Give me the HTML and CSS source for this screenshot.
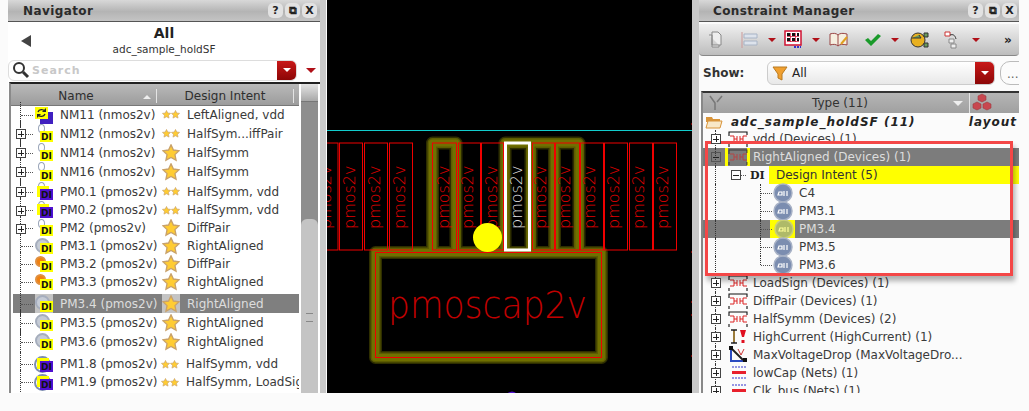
FILE: index.html
```html
<!DOCTYPE html>
<html lang="en">
<head>
    <meta charset="UTF-8">
    <meta name="viewport" content="width=device-width, initial-scale=1.0">
    <title>Constraint Manager</title>
    <link rel="stylesheet" href="styles.css">
</head>
<body>
    <svg class="defs" width="0" height="0">
        <symbol id="star" viewBox="0 0 20 20">
            <path d="M10 1l2.7 5.7 6.3.8-4.6 4.3 1.2 6.2-5.6-3-5.6 3 1.2-6.2L1 7.500l6.300-.8z" fill="#fc3" stroke="#c9a26a" stroke-width="1.5"/>
        </symbol>
        <symbol id="device" viewBox="0 0 20 18">
            <path d="M1 6V2H19V5M1 14V17M19 14V17" fill="none" stroke="#111" stroke-width="1.100"/>
            <path d="M2 6H6V12H2M6 9H9M9 6V12M12 6V12M12 9H15M19 6H15V12H19" fill="none" stroke="#d22" stroke-width="1"/>
        </symbol>
        <symbol id="pin" viewBox="0 0 20 20">
            <circle cx="10" cy="10" r="9" fill="#7b8db0" stroke="#a8b2c6" stroke-width="1.500"/>
            <path d="M5 12h4v-3h-3zM11 8v5M14 8v5" fill="none" stroke="#fff" stroke-width="1.200"/>
        </symbol>
    </svg>

    <div class="workspace">
        <section class="navigator">
            <div class="titlebar">
                <span class="title">Navigator</span>
                <span class="win-btn">?</span>
                <span class="win-btn">&#10697;</span>
                <span class="win-btn">X</span>
            </div>
            <div class="nav-head">
                <span class="back"></span>
                <div class="nav-name">
                    <div class="nav-all">All</div>
                    <div class="nav-cell">adc_sample_holdSF</div>
                </div>
            </div>
            <div class="search-row">
                <div class="search">
                    <svg class="lens" width="18" height="18" viewBox="0 0 18 18"><circle cx="7" cy="7" r="5" fill="none" stroke="#333" stroke-width="2"/><path d="M11 11l5 5" stroke="#333" stroke-width="3"/></svg>
                    <span class="placeholder">Search</span>
                    <span class="red-drop"><i></i></span>
                </div>
                <span class="red-arrow"></span>
            </div>
            <div class="nav-table">
                <div class="nav-list">
                    <div class="nav-header">
                        <span class="col-name">Name<i class="sort-up"></i></span>
                        <span class="col-intent">Design Intent</span>
                        <span class="col-end"></span>
                    </div>

                    <div class="row"><span class="twig"></span><span class="icon"><svg class="sync" width="18" height="18" viewBox="0 0 18 18"><rect x="5" y="6" width="13" height="12" fill="#4020c0"/><rect x="0" y="1" width="13" height="12" fill="#ff0"/><path d="M3 6c1-3 5-3 7-1M10 8c-1 3-5 3-7 1" fill="none" stroke="#222" stroke-width="1.300"/><path d="M11 2v4H7zM2 12V8h4z" fill="#222"/></svg></span><span class="name">NM11 (nmos2v)</span><span class="stars"><svg class="s2"><use href="#star"/></svg><svg class="s2"><use href="#star"/></svg></span><span class="intent">LeftAligned, vdd</span></div>
                    <div class="row"><span class="twig"><i class="box plus"></i></span><span class="icon"><i class="dot"></i><b class="di">DI</b></span><span class="name">NM12 (nmos2v)</span><span class="stars"><svg class="s2"><use href="#star"/></svg><svg class="s2"><use href="#star"/></svg></span><span class="intent">HalfSym...iffPair</span></div>
                    <div class="row"><span class="twig"><i class="box plus"></i></span><span class="icon"><i class="dot"></i><b class="di">DI</b></span><span class="name">NM14 (nmos2v)</span><span class="stars"><svg class="s1"><use href="#star"/></svg></span><span class="intent">HalfSymm</span></div>
                    <div class="row tall"><span class="twig"><i class="box plus"></i></span><span class="icon"><i class="dot"></i><b class="di">DI</b></span><span class="name">NM16 (nmos2v)</span><span class="stars"><svg class="s1"><use href="#star"/></svg></span><span class="intent">HalfSymm</span></div>
                    <div class="row"><span class="twig"><i class="box plus"></i></span><span class="icon"><i class="dot"></i><i class="back-y"></i><b class="di di-p">DI</b></span><span class="name">PM0.1 (pmos2v)</span><span class="stars"><svg class="s2"><use href="#star"/></svg><svg class="s2"><use href="#star"/></svg></span><span class="intent">HalfSymm, vdd</span></div>
                    <div class="row short"><span class="twig"><i class="box plus"></i></span><span class="icon"><i class="dot"></i><i class="back-y"></i><b class="di di-p">DI</b></span><span class="name">PM0.2 (pmos2v)</span><span class="stars"><svg class="s2"><use href="#star"/></svg><svg class="s2"><use href="#star"/></svg></span><span class="intent">HalfSymm, vdd</span></div>
                    <div class="row short"><span class="twig"><i class="box plus"></i></span><span class="icon"><i class="dot"></i><b class="di">DI</b></span><span class="name">PM2 (pmos2v)</span><span class="stars"><svg class="s1"><use href="#star"/></svg></span><span class="intent">DiffPair</span></div>
                    <div class="row short"><span class="twig"></span><span class="icon"><i class="ring"></i><b class="di">DI</b></span><span class="name">PM3.1 (pmos2v)</span><span class="stars"><svg class="s1"><use href="#star"/></svg></span><span class="intent">RightAligned</span></div>
                    <div class="row short"><span class="twig"></span><span class="icon"><i class="ring ring-o"></i><b class="di">DI</b></span><span class="name">PM3.2 (pmos2v)</span><span class="stars"><svg class="s1"><use href="#star"/></svg></span><span class="intent">DiffPair</span></div>
                    <div class="row short"><span class="twig"></span><span class="icon"><i class="ring ring-o"></i><b class="di">DI</b></span><span class="name">PM3.3 (pmos2v)</span><span class="stars"><svg class="s1"><use href="#star"/></svg></span><span class="intent">RightAligned</span></div>
                    <div class="row selected gap-s"><span class="twig"></span><span class="icon"><i class="ring"></i><b class="di">DI</b></span><span class="name">PM3.4 (pmos2v)</span><span class="stars"><svg class="s1"><use href="#star"/></svg></span><span class="intent">RightAligned</span></div>
                    <div class="row"><span class="twig"></span><span class="icon"><i class="ring"></i><b class="di">DI</b></span><span class="name">PM3.5 (pmos2v)</span><span class="stars"><svg class="s1"><use href="#star"/></svg></span><span class="intent">RightAligned</span></div>
                    <div class="row"><span class="twig"></span><span class="icon"><i class="ring"></i><b class="di">DI</b></span><span class="name">PM3.6 (pmos2v)</span><span class="stars"><svg class="s1"><use href="#star"/></svg></span><span class="intent">RightAligned</span></div>
                    <div class="row short gap-l"><span class="twig"></span><span class="icon"><i class="ring ring-big"></i><i class="back-y"></i><b class="di di-p">DI</b></span><span class="name">PM1.8 (pmos2v)</span><span class="stars small"><svg class="s2"><use href="#star"/></svg><svg class="s2"><use href="#star"/></svg></span><span class="intent">HalfSymm, vdd</span></div>
                    <div class="row short"><span class="twig"></span><span class="icon"><i class="ring ring-big"></i><i class="back-y"></i><b class="di di-p">DI</b></span><span class="name">PM1.9 (pmos2v)</span><span class="stars small"><svg class="s2"><use href="#star"/></svg><svg class="s2"><use href="#star"/></svg></span><span class="intent">HalfSymm, LoadSig</span></div>
                </div>
                <div class="scrollbar">
                    <span class="scroll-up"></span>
                    <span class="scroll-thumb"><i></i></span>
                </div>
            </div>
        </section>

        <svg class="layout" width="365" height="393" viewBox="327 0 365 393">
            <rect x="327" y="0" width="365" height="393" fill="#000"/>
            <path d="M327 130.500H692" stroke="#1cc" stroke-width="1"/>

            <!-- halo round the selected group -->
            <g class="halo">
                <path d="M432.500 250V143H456V250M505 250V143H579V250M531 143V250M554.500 143V250M375.500 357.500V252.500H601.500V357.500Z"/>
            </g>
            <g class="halo-mid">
                <path d="M432.500 250V143H456V250M505 250V143H579V250M531 143V250M554.500 143V250M375.500 357.500V252.500H601.500V357.500Z"/>
            </g>
            <g class="halo-in">
                <path d="M432.500 250V143H456V250M505 250V143H579V250M531 143V250M554.500 143V250M375.500 357.500V252.500H601.500V357.500Z"/>
            </g>

            <g class="dev">
                <rect x="314" y="143" width="24" height="107"/>
                <rect x="339.500" y="143" width="23" height="107"/>
                <rect x="364.500" y="143" width="23" height="107"/>
                <rect x="389.500" y="143" width="23" height="107"/>
                <rect x="432.500" y="143" width="24" height="107"/>
                <rect x="458.500" y="143" width="22" height="107"/>
                <rect x="481.500" y="143" width="22" height="107"/>
                <rect x="532.500" y="143" width="22" height="107"/>
                <rect x="555.500" y="143" width="24" height="107"/>
                <rect x="580.500" y="143" width="23" height="107"/>
                <rect x="604.500" y="143" width="23" height="107"/>
                <rect x="629.500" y="143" width="23" height="107"/>
                <rect x="653.500" y="143" width="23" height="107"/>
                <rect x="375.500" y="252.500" width="226" height="105"/>
            </g>
            <rect class="picked" x="505.500" y="143" width="24" height="107"/>

            <g class="dev-text">
                <text transform="translate(331,229) rotate(-90)">pmos2v</text>
                <text transform="translate(355,229) rotate(-90)">pmos2v</text>
                <text transform="translate(380,229) rotate(-90)">pmos2v</text>
                <text transform="translate(405,229) rotate(-90)">pmos2v</text>
                <text transform="translate(449,229) rotate(-90)">pmos2v</text>
                <text transform="translate(473,229) rotate(-90)">pmos2v</text>
                <text transform="translate(497,229) rotate(-90)">pmos2v</text>
                <text class="picked-text" transform="translate(522,229) rotate(-90)">pmos2v</text>
                <text transform="translate(546,229) rotate(-90)">pmos2v</text>
                <text transform="translate(570,229) rotate(-90)">pmos2v</text>
                <text transform="translate(595,229) rotate(-90)">pmos2v</text>
                <text transform="translate(619,229) rotate(-90)">pmos2v</text>
                <text transform="translate(644,229) rotate(-90)">pmos2v</text>
                <text transform="translate(668,229) rotate(-90)">pmos2v</text>
            </g>
            <text class="cap-text" x="388" y="318" textLength="199" lengthAdjust="spacingAndGlyphs">pmoscap2v</text>

            <circle cx="487.500" cy="237.500" r="14.500" fill="#ff0"/>
            <circle cx="512" cy="397.500" r="6" fill="#5010d0"/>
            <path d="M691 302h1M691 315h1M691 356h1M691 252h1M691 124h1" stroke="#e00"/>
        </svg>

        <section class="manager">
            <div class="titlebar">
                <span class="title">Constraint Manager</span>
                <span class="win-btn">?</span>
                <span class="win-btn">&#10697;</span>
                <span class="win-btn">X</span>
            </div>
            <div class="toolbar">
                <svg class="tool t-doc" width="16" height="18" viewBox="0 0 16 18"><path d="M5 1h6l3 3v10H5zM2 4h3v12h7v-2" fill="#eee" stroke="#888"/></svg>
                <svg class="tool t-list" width="18" height="18" viewBox="0 0 18 18"><path d="M1 1v16" stroke="#c99"/><path d="M3 3h13v4H3zM3 10h13v4H3z" fill="#dde3ec" stroke="#a8b4c6"/></svg>
                <span class="drop"></span>
                <svg class="tool t-grid" width="18" height="19" viewBox="0 0 18 19"><rect x="1" y="1" width="16" height="14" fill="#fff" stroke="#d01030" stroke-width="1.500"/><path d="M3 3h3v3H3zM8 3h3v3H8zM13 3h2v3h-2zM3 8h3v3H3zM8 8h3v3H8zM13 8h2v3h-2z" fill="#111"/><path d="M3 6.500h12M3 11.500h12M6.500 3v9M11.500 3v9" stroke="#d01030" stroke-width=".7"/><path d="M10 17h7" stroke="#33c" stroke-width="2" stroke-dasharray="2 1"/></svg>
                <span class="drop"></span>
                <svg class="tool t-book" width="20" height="16" viewBox="0 0 20 16"><path d="M1 2c3-1 6-1 8 1 2-2 5-2 9-1v11c-4-1-7-1-9 1-2-2-5-2-8-1z" fill="#f6efe0" stroke="#944"/><path d="M9 3v11" stroke="#944"/><path d="M12 12l6-7" stroke="#e0a020" stroke-width="2"/></svg>
                <svg class="tool t-check" width="18" height="14" viewBox="0 0 18 14"><path d="M1 7l3-2 3 3 7-7 3 2-10 10z" fill="#1a9a2a"/></svg>
                <span class="drop"></span>
                <svg class="tool t-run" width="20" height="20" viewBox="0 0 20 20"><circle cx="9" cy="10" r="7" fill="#e8b020" stroke="#333"/><path d="M3 8h9l-2-3M15 3h4v4h-4zM15 13h4v4h-4z" fill="#6a9a5a" stroke="#333"/></svg>
                <svg class="tool t-tree" width="18" height="18" viewBox="0 0 18 18"><path d="M1 1h5v4H1z" fill="#fff" stroke="#c33"/><path d="M6 4c3-1 5 0 6 4" fill="none" stroke="#333"/><path d="M5 8h5v4H5zM7 13h5v4H7z" fill="#eee" stroke="#888"/></svg>
                <span class="drop"></span>
                <span class="more">&raquo;</span>
            </div>
            <div class="show-row">
                <span class="show-label">Show:</span>
                <div class="show-select">
                    <svg width="16" height="16" viewBox="0 0 16 16"><path d="M1 2h14l-5 7v6l-4-2V9z" fill="#f0a030" stroke="#b97a20"/></svg>
                    <span>All</span>
                    <span class="red-drop"><i></i></span>
                </div>
                <span class="dots-btn">...</span>
            </div>
            <div class="tree-header">
                <svg width="14" height="16" viewBox="0 0 14 16"><path d="M1 1l5 7v7M13 1L8 7" fill="none" stroke="#777" stroke-width="1.500"/></svg>
                <span class="type-col">Type (11)</span>
                <i class="sort-down"></i>
                <span class="cubes">
                    <svg width="20" height="18" viewBox="0 0 20 18"><path d="M10 1l4 2v4l-4 2-4-2V3zM5 9l4 2v4l-4 2-4-2v-4zM15 9l4 2v4l-4 2-4-2v-4z" fill="#c8474f" stroke="#9a3a40" stroke-width=".6"/></svg>
                </span>
            </div>
            <div class="tree">
                <div class="tree-row root">
                    <svg class="folder" width="18" height="16" viewBox="0 0 18 16"><path d="M1 3h6l1 2h7v3H1z" fill="#d8943a"/><path d="M1 14l2-7h14l-2 7z" fill="#f8e8c8" stroke="#d8943a"/></svg>
                    <span class="root-name">adc_sample_holdSF (11)</span>
                    <span class="root-view">layout</span>
                </div>
                <div class="tree-row"><span class="twig-r"><i class="box plus"></i></span><span class="dev-ic"><svg width="20" height="18"><use href="#device"/></svg></span><span class="label">vdd (Devices) (1)</span></div>
                <div class="tree-row band"><span class="twig-r"><i class="box minus"></i></span><span class="dev-ic hit"><svg width="20" height="18"><use href="#device"/></svg></span><span class="label">RightAligned (Devices) (1)</span></div>
                <div class="tree-row"><span class="twig-r"></span><span class="twig-2"><i class="box minus"></i></span><span class="di-mark">DI</span><span class="label-hit">Design Intent (5)</span></div>
                <div class="tree-row"><span class="twig-r"></span><span class="lead"></span><span class="twig-3"></span><span class="pin"><svg width="20" height="20"><use href="#pin"/></svg></span><span class="label">C4</span></div>
                <div class="tree-row"><span class="twig-r"></span><span class="lead"></span><span class="twig-3"></span><span class="pin"><svg width="20" height="20"><use href="#pin"/></svg></span><span class="label">PM3.1</span></div>
                <div class="tree-row band"><span class="twig-r"></span><span class="lead"></span><span class="twig-3"></span><span class="pin hit"><svg width="20" height="20"><use href="#pin"/></svg></span><span class="label">PM3.4</span></div>
                <div class="tree-row"><span class="twig-r"></span><span class="lead"></span><span class="twig-3"></span><span class="pin"><svg width="20" height="20"><use href="#pin"/></svg></span><span class="label">PM3.5</span></div>
                <div class="tree-row"><span class="twig-r"></span><span class="lead"></span><span class="twig-3 end"></span><span class="pin"><svg width="20" height="20"><use href="#pin"/></svg></span><span class="label">PM3.6</span></div>
                <div class="tree-row"><span class="twig-r"><i class="box plus"></i></span><span class="dev-ic"><svg width="20" height="18"><use href="#device"/></svg></span><span class="label">LoadSign (Devices) (1)</span></div>
                <div class="tree-row"><span class="twig-r"><i class="box plus"></i></span><span class="dev-ic"><svg width="20" height="18"><use href="#device"/></svg></span><span class="label">DiffPair (Devices) (1)</span></div>
                <div class="tree-row"><span class="twig-r"><i class="box plus"></i></span><span class="dev-ic"><svg width="20" height="18"><use href="#device"/></svg></span><span class="label">HalfSymm (Devices) (2)</span></div>
                <div class="tree-row"><span class="twig-r"><i class="box plus"></i></span><span class="dev-ic"><svg width="20" height="18" viewBox="0 0 20 18"><path d="M3 2h6M3 15h6M6 2v13" stroke="#222" stroke-width="1.500"/><path d="M6 3v11" stroke="#e0a020"/><path d="M12 2h6l-2 7h-2zM13.500 12h3v3h-3z" fill="#e01020"/></svg></span><span class="label">HighCurrent (HighCurrent) (1)</span></div>
                <div class="tree-row"><span class="twig-r"><i class="box plus"></i></span><span class="dev-ic"><svg width="20" height="18" viewBox="0 0 20 18"><path d="M3 2v13h14" fill="none" stroke="#2a4ac0" stroke-width="2"/><path d="M3 2l12 12" stroke="#222" stroke-width="2"/><path d="M10 3l3 6 3-6" fill="none" stroke="#c33"/><rect x="1" y="0" width="4" height="4" fill="#111"/><rect x="15" y="12" width="4" height="4" fill="#111"/></svg></span><span class="label">MaxVoltageDrop (MaxVoltageDro...</span></div>
                <div class="tree-row"><span class="twig-r"><i class="box plus"></i></span><span class="dev-ic"><svg width="20" height="18" viewBox="0 0 20 18"><path d="M4 3h14M4 14h14" stroke="#33c" stroke-dasharray="2 1"/><path d="M4 8.500h14" stroke="#e8202c" stroke-width="3"/></svg></span><span class="label">lowCap (Nets) (1)</span></div>
                <div class="tree-row"><span class="twig-r"><i class="box plus"></i></span><span class="dev-ic"><svg width="20" height="18" viewBox="0 0 20 18"><path d="M4 3h14M4 14h14" stroke="#33c" stroke-dasharray="2 1"/><path d="M4 8.500h14" stroke="#e8202c" stroke-width="3"/></svg></span><span class="label">Clk_bus (Nets) (1)</span></div>
            </div>
            <div class="highlight"></div>
        </section>
    </div>
</body>
</html>
```

FILE: styles.css
```css
body {
    margin: 0;
    height: 411px;
    overflow: hidden;
    background-color: #fbfbfb;
    font-family: "DejaVu Sans", sans-serif;
    font-size: 12px;
    color: #3a3a3a;
}
.defs {
    position: absolute;
}
.workspace {
    display: flex;
    height: 393px;
    padding-left: 8px;
    overflow: hidden;
}

/* shared bits */
.titlebar {
    display: flex;
    align-items: center;
    height: 22px;
    box-sizing: border-box;
    border-bottom: 1px solid #555;
    background: linear-gradient(#d8d8d8, #b4b4b4 55%, #c4c4c4);
}
.title {
    flex: 1;
    font-weight: bold;
    letter-spacing: 0.4px;
    color: #2b2b2b;
}
.win-btn {
    width: 15px;
    height: 15px;
    margin-right: 2px;
    border-radius: 5px;
    background-color: #e2e2e2;
    text-align: center;
    font-size: 11px;
    font-weight: bold;
    line-height: 15px;
    color: #222;
}
.red-drop {
    display: flex;
    align-items: center;
    justify-content: center;
    width: 19px;
    align-self: stretch;
    border-radius: 0 5px 5px 0;
    background: linear-gradient(#c81818, #8c0606);
}
.red-drop i {
    border-left: 4px solid transparent;
    border-right: 4px solid transparent;
    border-top: 4px solid #fff;
}
.box {
    position: absolute;
    top: 5px;
    z-index: 1;
    width: 8px;
    height: 8px;
    border: 1px solid #444;
    background-color: #fff;
    background-repeat: no-repeat;
    background-position: center;
}
.plus {
    background-image: linear-gradient(#222, #222), linear-gradient(#222, #222);
    background-size: 6px 1px, 1px 6px;
}
.minus {
    background-image: linear-gradient(#222, #222);
    background-size: 6px 1px;
}

/* left panel */
.navigator {
    width: 312px;
    flex: none;
    margin-right: 1px;
    border-right: 6px solid #c8c8c8;
    background-color: #fff;
}
.navigator .titlebar {
    padding-left: 15px;
    padding-right: 1px;
}
.nav-head {
    display: flex;
    align-items: center;
    height: 37px;
    padding-left: 13px;
}
.back {
    border-top: 6px solid transparent;
    border-bottom: 6px solid transparent;
    border-right: 10px solid #444;
}
.nav-name {
    flex: 1;
    text-align: center;
    padding-right: 23px;
}
.nav-all {
    font-size: 14px;
    font-weight: bold;
    line-height: 17px;
    color: #222;
}
.nav-cell {
    font-size: 10.500px;
    line-height: 14px;
    color: #333;
}
.search-row {
    display: flex;
    align-items: center;
    height: 22px;
}
.search {
    display: flex;
    align-items: center;
    width: 289px;
    height: 21px;
    border: 1px solid #ddd;
    border-radius: 6px;
    box-sizing: border-box;
}
.lens {
    margin-left: 3px;
}
.placeholder {
    flex: 1;
    margin-left: 2px;
    font-weight: bold;
    letter-spacing: 1px;
    font-size: 11px;
    color: #c8c8c8;
}
.red-arrow {
    margin-left: 9px;
    border-left: 5px solid transparent;
    border-right: 5px solid transparent;
    border-top: 5px solid #b01018;
}
.nav-table {
    display: flex;
    height: 311px;
    margin-top: 1px;
    margin-left: 1px;
    border-top: 2px solid #222;
    border-left: 2px solid #8a8a8a;
    overflow: hidden;
}
.nav-list {
    width: 288px;
    flex: none;
}
.nav-header {
    display: flex;
    height: 21px;
    box-sizing: border-box;
    padding-top: 2px;
    align-items: center;
    background: linear-gradient(#b9b9b9, #9c9c9c);
    box-shadow: 0 1px 0 #777;
    color: #2e2e2e;
}
.col-name {
    position: relative;
    width: 146px;
    text-align: center;
    box-sizing: border-box;
    padding-right: 15px;
    border-right: 1px solid #e4e4e4;
}
.sort-up {
    position: absolute;
    top: 6px;
    right: 5px;
    border-left: 4px solid transparent;
    border-right: 4px solid transparent;
    border-bottom: 4px solid #eee;
}
.col-intent {
    flex: 1;
    text-align: center;
    border-right: 1px solid #e4e4e4;
}
.col-end {
    width: 5px;
}
.row {
    display: flex;
    align-items: center;
    height: 19px;
    margin-left: 2px;
    white-space: nowrap;
}
.short {
    height: 18px;
}
.tall {
    height: 20px;
}
.gap-s {
    margin-top: 3px;
}
.gap-l {
    margin-top: 4px;
}
.selected {
    background: #7f7f7f;
    color: #ddd;
}
.selected .icon,
.selected .stars {
    background-color: #c4c4c4;
}
.twig {
    position: relative;
    align-self: stretch;
    width: 22px;
    flex: none;
}
.twig::before {
    content: "";
    position: absolute;
    left: 7px;
    top: -3px;
    bottom: -3px;
    border-left: 1px dotted #333;
}
.twig::after {
    content: "";
    position: absolute;
    left: 8px;
    width: 12px;
    top: 50%;
    border-top: 1px dotted #555;
}
.twig .box {
    left: 3px;
}
.icon {
    position: relative;
    align-self: stretch;
    width: 18px;
    margin-right: 7px;
    flex: none;
}
.di {
    position: absolute;
    left: 5px;
    bottom: 1px;
    z-index: 2;
    width: 13px;
    height: 11px;
    background-color: #ff0;
    color: #111;
    font-size: 9px;
    line-height: 12px;
    text-align: center;
}
.di-p {
    background-color: #5010d0;
}
.sync {
    display: block;
    margin-top: 1px;
}
.back-y {
    position: absolute;
    left: 2px;
    bottom: 4px;
    z-index: 1;
    width: 12px;
    height: 11px;
    background-color: #ff0;
}
.dot {
    position: absolute;
    left: 3px;
    top: 0;
    width: 5px;
    height: 7px;
    border: 1px solid #99a4b8;
    border-radius: 50%;
}
.ring {
    position: absolute;
    left: 0;
    top: 1px;
    width: 11px;
    height: 11px;
    border: 2px solid #a6aebd;
    border-radius: 50%;
    background-color: #c6ccd6;
}
.ring-o {
    width: 7px;
    height: 7px;
    border-color: #e09040;
    background-color: #f08010;
}
.ring-big {
    width: 13px;
    height: 13px;
    left: -1px;
    border-color: #7d8db0;
    background-color: #fff;
}
.name {
    width: 96px;
    flex: none;
}
.stars {
    display: flex;
    align-items: center;
    justify-content: center;
    align-self: stretch;
    width: 18px;
    margin: 0 7px 0 6px;
    flex: none;
}
.s1 {
    width: 18px;
    height: 18px;
}
.s2 {
    width: 9px;
    height: 9px;
}
.small {
    margin-right: 7px;
    margin-left: 5px;
}
.intent {
    flex: 1;
    overflow: hidden;
}
.scrollbar {
    display: flex;
    flex-direction: column;
    justify-content: space-between;
    width: 17px;
    margin-left: 2px;
    background-color: #8e8e8e;
}
.scroll-up {
    height: 17px;
    background: linear-gradient(#e4e4e4, #a8a8a8);
    border-bottom: 1px solid #777;
}
.scroll-thumb {
    display: flex;
    align-items: flex-start;
    justify-content: center;
    height: 176px;
    border-radius: 6px 6px 0 0;
    background-color: #c4c4c4;
}
.scroll-thumb i {
    width: 7px;
    height: 7px;
    margin-top: 94px;
    border-top: 1px solid #888;
    border-bottom: 1px solid #888;
}

/* layout canvas */
.layout {
    flex: none;
}
.halo path,
.halo-mid path,
.halo-in path {
    fill: none;
    stroke-linejoin: round;
}
.halo path {
    stroke: #2e2e00;
    stroke-width: 13px;
}
.halo-mid path {
    stroke: #5c5c00;
    stroke-width: 10px;
}
.halo-in path {
    stroke: #707000;
    stroke-width: 7px;
}
.dev rect {
    fill: none;
    stroke: #f00000;
    stroke-width: 1px;
}
.picked {
    fill: none;
    stroke: #fff;
    stroke-width: 3px;
}
.dev-text text {
    font-family: "DejaVu Sans", sans-serif;
    font-weight: 200;
    font-size: 16px;
    fill: #e00000;
}
.dev-text .picked-text {
    fill: #ddd;
}
.cap-text {
    font-family: "DejaVu Sans", sans-serif;
    font-weight: 200;
    font-size: 37px;
    fill: #c00000;
}

/* right panel */
.manager {
    position: relative;
    width: 327px;
    flex: none;
    box-sizing: border-box;
    border-left: 7px solid #c8c8c8;
    background-color: #fbfbfb;
    overflow: hidden;
}
.manager .titlebar {
    padding-left: 14px;
    padding-right: 0;
}
.toolbar {
    display: flex;
    align-items: center;
    height: 32px;
    margin-top: 2px;
    background: linear-gradient(#f0f0f0, #bdbdbd);
    border-radius: 0 0 4px 4px;
    border-bottom: 1px solid #888;
    padding-left: 8px;
    box-sizing: border-box;
}
.tool {
    flex: none;
}
.t-list {
    margin-left: 18px;
}
.drop {
    flex: none;
    margin-left: 9px;
    border-left: 4px solid transparent;
    border-right: 4px solid transparent;
    border-top: 4px solid #b01018;
}
.t-grid {
    margin-left: 8px;
}
.t-grid + .drop {
    margin-left: 10px;
}
.t-book {
    margin-left: 9px;
}
.t-check {
    margin-left: 15px;
}
.t-run {
    margin-left: 10px;
}
.t-tree {
    margin-left: 15px;
}
.t-tree + .drop {
    margin-left: 10px;
}
.more {
    margin-left: 24px;
    font-weight: bold;
    color: #222;
    white-space: nowrap;
}
.show-row {
    display: flex;
    align-items: center;
    height: 26px;
    margin-top: 4px;
    padding-left: 4px;
}
.show-label {
    width: 64px;
    flex: none;
    font-weight: bold;
    color: #333;
}
.show-select {
    display: flex;
    align-items: center;
    gap: 4px;
    width: 228px;
    height: 24px;
    flex: none;
    box-sizing: border-box;
    padding-left: 4px;
    border: 1px solid #ccc;
    border-radius: 6px;
    background: linear-gradient(#fff, #e8e8e8);
    color: #222;
}
.show-select > span:nth-child(2) {
    flex: 1;
}
.dots-btn {
    flex: none;
    width: 30px;
    height: 24px;
    margin-left: 5px;
    box-sizing: border-box;
    border: 1px solid #bbb;
    border-radius: 10px;
    padding-left: 6px;
    color: #666;
    line-height: 24px;
}
.tree-header {
    display: flex;
    align-items: center;
    height: 22px;
    margin-top: 5px;
    margin-left: 2px;
    padding-left: 6px;
    box-sizing: border-box;
    border-top: 2px solid #333;
    border-left: 2px solid #888;
    background: linear-gradient(#b5b5b5, #a0a0a0);
    color: #333;
}
.type-col {
    width: 226px;
    padding-left: 8px;
    text-align: center;
    box-sizing: border-box;
}
.sort-down {
    margin-left: 4px;
    border-left: 5px solid transparent;
    border-right: 5px solid transparent;
    border-top: 5px solid #eee;
}
.cubes {
    margin-left: 6px;
    padding-left: 2px;
    border-left: 1px solid #e4e4e4;
    height: 20px;
}
.tree {
    margin-left: 2px;
    border-left: 2px solid #888;
    height: 282px;
    overflow: hidden;
}
.tree-row {
    display: flex;
    align-items: center;
    height: 18px;
    white-space: nowrap;
}
.root {
    position: relative;
    height: 17px;
    font-weight: bold;
    font-style: italic;
    color: #222;
    letter-spacing: 1px;
    padding-left: 2px;
}
.folder {
    flex: none;
    margin-right: 8px;
}
.root-name {
    flex: 1;
}
.root-view {
    padding-right: 2px;
}
.twig-r {
    position: relative;
    align-self: stretch;
    width: 22px;
    flex: none;
}
.twig-r::before {
    content: "";
    position: absolute;
    left: 12px;
    top: 0;
    bottom: 0;
    border-left: 1px dotted #333;
}
.twig-r .box {
    left: 8px;
    top: 4px;
}
.dev-ic {
    width: 28px;
    flex: none;
    display: flex;
    justify-content: center;
    padding-right: 3px;
    box-sizing: border-box;
}
.dev-ic.hit {
    background: linear-gradient(90deg, #ff0 3px, transparent 3px, transparent 22px, #ff0 22px, #ff0 25px, transparent 25px);
    align-self: stretch;
    align-items: center;
}
.band {
    background-color: #7c7c7c;
    color: #ddd;
}
.band svg {
    opacity: 0.6;
}
.band .box {
    background-color: transparent;
    border-color: #555;
}
.twig-2 {
    position: relative;
    align-self: stretch;
    width: 25px;
    flex: none;
}
.twig-2::after {
    content: "";
    position: absolute;
    left: 11px;
    right: 4px;
    top: 50%;
    border-top: 1px dotted #555;
}
.twig-2 .box {
    left: 6px;
    top: 4px;
}
.di-mark {
    width: 19px;
    flex: none;
    font-family: "DejaVu Serif", serif;
    font-weight: bold;
    font-size: 11px;
    color: #222;
}
.label-hit {
    flex: 1;
    align-self: stretch;
    line-height: 18px;
    padding-left: 7px;
    background-color: #ff0;
    color: #333;
}
.lead {
    width: 30px;
    flex: none;
}
.twig-3 {
    position: relative;
    align-self: stretch;
    width: 17px;
    flex: none;
}
.twig-3::before {
    content: "";
    position: absolute;
    left: 5px;
    top: 0;
    bottom: 0;
    border-left: 1px dotted #333;
}
.twig-3::after {
    content: "";
    position: absolute;
    left: 6px;
    right: 0;
    top: 50%;
    border-top: 1px dotted #555;
}
.twig-3.end::before {
    bottom: 50%;
}
.pin {
    display: flex;
    align-items: center;
    justify-content: center;
    width: 21px;
    margin-right: 6px;
    flex: none;
    align-self: stretch;
}
.pin.hit {
    background-color: #ff0;
    margin-left: -2px;
    padding-left: 2px;
    width: 23px;
    margin-right: 4px;
}
.highlight {
    position: absolute;
    left: 6px;
    top: 141px;
    width: 308px;
    height: 135px;
    box-sizing: border-box;
    border: 3px solid #f44747;
    box-shadow: 2px 5px 5px rgba(0, 0, 0, 0.3);
}
```
